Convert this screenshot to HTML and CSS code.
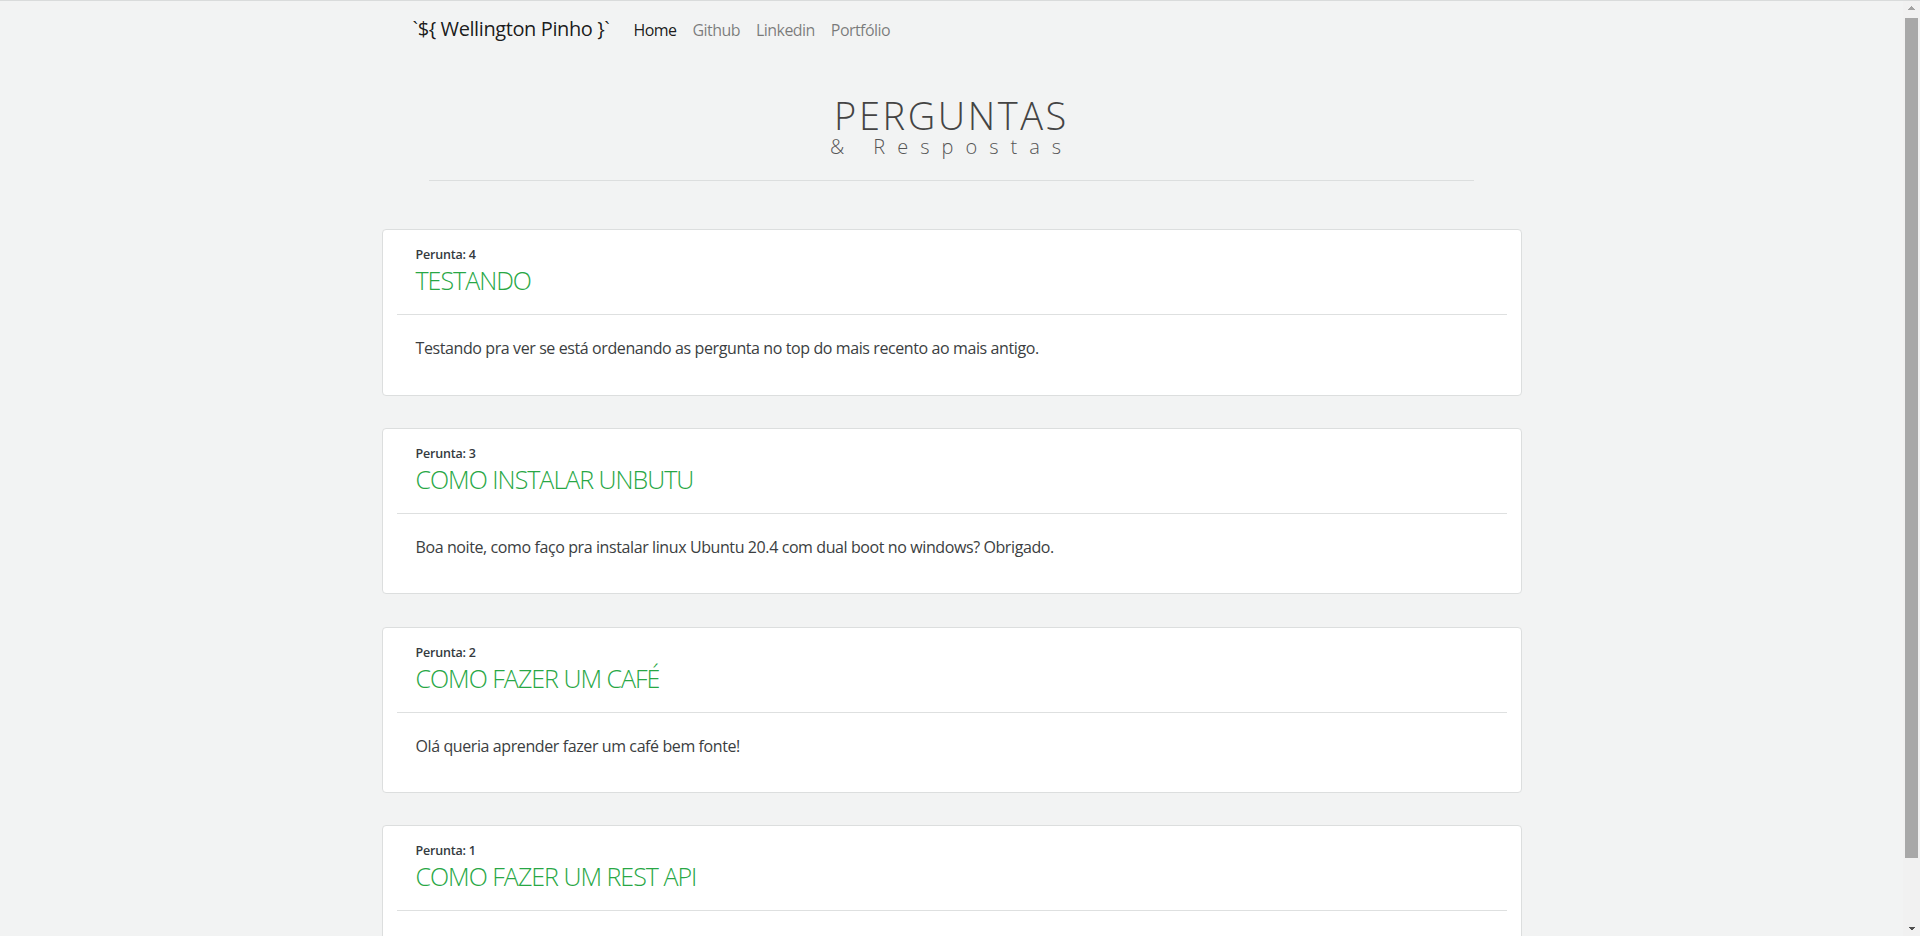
FILE: index.html
```html
<!DOCTYPE html>
<html lang="pt-BR">
<head>
<meta charset="utf-8">
<title>Perguntas &amp; Respostas</title>
<link rel="stylesheet" href="styles.css">
</head>
<body>
<div class="page">
  <div class="container">
    <nav class="navbar">
      <a class="brand" href="#">`${ Wellington Pinho }`</a>
      <ul class="nav-links">
        <li><a class="nav-link active" href="#">Home</a></li>
        <li><a class="nav-link" href="#">Github</a></li>
        <li><a class="nav-link" href="#">Linkedin</a></li>
        <li><a class="nav-link" href="#">Portfólio</a></li>
      </ul>
    </nav>

    <header class="hero">
      <h1 class="hero-title">PERGUNTAS</h1>
      <p class="hero-sub">&amp; Respostas</p>
      <hr class="hero-rule">
    </header>

    <main class="questions">
      <article class="card">
        <div class="card-head">
          <div class="q-label">Perunta: 4</div>
          <h2 class="q-title">TESTANDO</h2>
        </div>
        <p class="q-body">Testando pra ver se está ordenando as pergunta no top do mais recento ao mais antigo.</p>
      </article>
      <article class="card">
        <div class="card-head">
          <div class="q-label">Perunta: 3</div>
          <h2 class="q-title">COMO INSTALAR UNBUTU</h2>
        </div>
        <p class="q-body">Boa noite, como faço pra instalar linux Ubuntu 20.4 com dual boot no windows? Obrigado.</p>
      </article>
      <article class="card">
        <div class="card-head">
          <div class="q-label">Perunta: 2</div>
          <h2 class="q-title">COMO FAZER UM CAFÉ</h2>
        </div>
        <p class="q-body">Olá queria aprender fazer um café bem fonte!</p>
      </article>
      <article class="card">
        <div class="card-head">
          <div class="q-label">Perunta: 1</div>
          <h2 class="q-title">COMO FAZER UM REST API</h2>
        </div>
        <div class="q-body q-body-empty"></div>
      </article>
    </main>
  </div>
</div>
<div class="scrollbar">
  <div class="sb-btn sb-up"></div>
  <div class="sb-track"><div class="sb-thumb"></div></div>
  <div class="sb-btn sb-down"></div>
</div>
</body>
</html>
```
FILE: styles.css
```css
* { box-sizing: border-box; }

html, body { height: 100%; }

body {
  margin: 0;
  border-top: 1px solid #d9dbdb;
  background: #f2f3f3;
  font-family: "Open Sans", "Noto Sans", sans-serif;
  color: #343a40;
  display: flex;
  overflow: hidden;
}

.page {
  flex: 1;
  overflow: hidden;
  min-width: 0;
}

.container {
  width: 1140px;
  margin: 0 auto;
  padding-bottom: 16px;
}

/* navbar */
.navbar {
  display: flex;
  align-items: baseline;
  padding: 13px 16px 13px 31px;
}

.brand {
  font-size: 20px;
  line-height: 30px;
  letter-spacing: -0.4px;
  color: rgba(0, 0, 0, .9);
  text-decoration: none;
  margin-right: 16px;
}

.nav-links {
  display: flex;
  list-style: none;
  margin: 0;
  padding: 0;
}

.nav-link {
  display: block;
  padding: 0 8px;
  font-size: 16px;
  line-height: 24px;
  letter-spacing: -0.55px;
  color: rgba(0, 0, 0, .5);
  text-decoration: none;
}

.nav-link.active { color: rgba(0, 0, 0, .9); }

/* hero */
.hero {
  margin-top: 36px;
  text-align: center;
}

.hero-title {
  margin: 0;
  font-size: 38px;
  line-height: 44px;
  font-weight: 300;
  letter-spacing: 2.6px;
  color: #444;
}

.hero-sub {
  margin: 0;
  font-size: 20px;
  line-height: 20px;
  font-weight: 300;
  letter-spacing: 12px;
  color: #555;
}

.hero-rule {
  margin: 23px 47.5px 0;
  border: 0;
  border-top: 1px solid #dcdede;
}

/* questions */
.questions {
  display: flex;
  flex-direction: column;
  gap: 32.3px;
  margin-top: 48px;
}

.card {
  background: #fff;
  border: 1px solid #dcdede;
  border-radius: 4px;
  padding: 0 14px;
}

.card-head {
  padding: 17px 19px 19px;
  border-bottom: 1px solid #dee0e0;
}

.q-label {
  font-size: 12.5px;
  line-height: 16px;
  font-weight: 600;
  letter-spacing: -0.2px;
  color: #343a40;
}

.q-title {
  margin: 2px 0 0;
  font-size: 25px;
  line-height: 30px;
  font-weight: 300;
  letter-spacing: -1px;
  color: #28a745;
}

.q-body {
  margin: 0;
  padding: 21px 19px 34.5px;
  font-size: 16px;
  line-height: 24px;
  letter-spacing: -0.4px;
  color: #3b3e41;
}

.q-body-empty { min-height: 79.5px; }

/* scrollbar */
.scrollbar {
  width: 17px;
  flex: none;
  background: #f1f1f1;
  display: flex;
  flex-direction: column;
}

.sb-btn {
  height: 17px;
  flex: none;
  background-repeat: no-repeat;
  background-size: 4px 4px;
}

.sb-up {
  background-image:
    linear-gradient(to top left, #a3a3a3 50%, transparent 50%),
    linear-gradient(to top right, #a3a3a3 50%, transparent 50%);
  background-position: 4.5px 5px, 8.5px 5px;
}

.sb-down {
  background-image:
    linear-gradient(to bottom left, #505050 50%, transparent 50%),
    linear-gradient(to bottom right, #505050 50%, transparent 50%);
  background-position: 4.5px 8px, 8.5px 8px;
}

.sb-track {
  flex: 1;
  padding: 0 2px;
}

.sb-thumb {
  height: 840px;
  background: #a8a8a8;
}
```
